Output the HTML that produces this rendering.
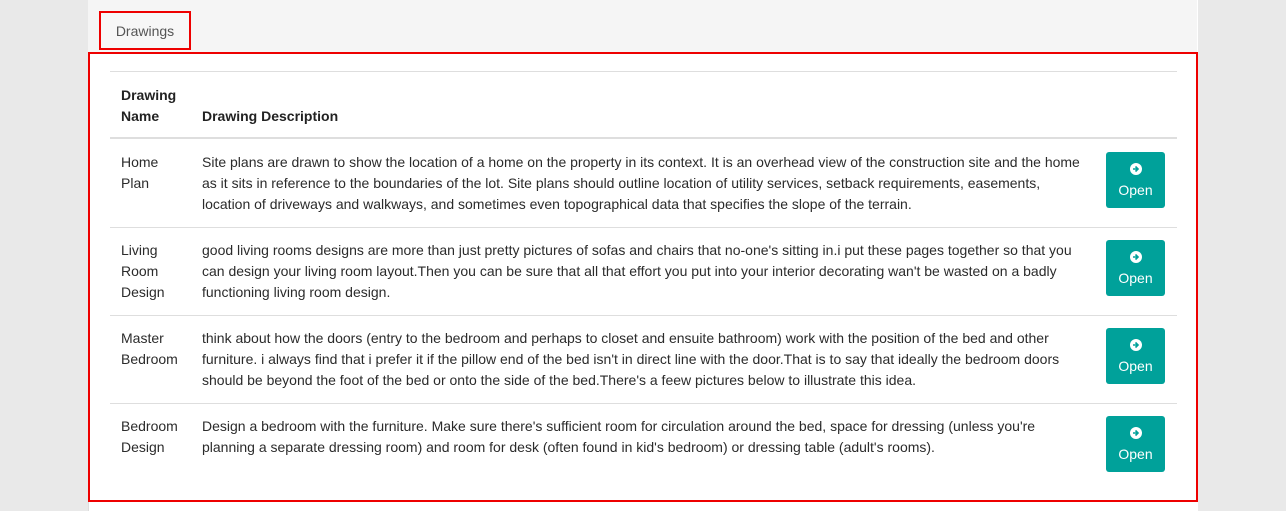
<!DOCTYPE html>
<html><head><style>
body{margin:0;width:1286px;height:511px;background:#e9e9e9;font-family:"Liberation Sans",Arial,sans-serif;color:#2b2b2b;position:relative;overflow:hidden}
.panel{position:absolute;left:88px;top:0;width:1109px;height:511px;background:#fff;border-left:1px solid #ddd}
.top{position:absolute;left:88px;top:0;width:1109px;height:52px;background:#f5f5f5;border-bottom:1px solid #ddd}
.tab{position:absolute;left:99px;top:11px;width:88px;height:35px;border:2px solid #e00;font-size:14px;color:#555;line-height:36px;text-align:center;background:#f7f7f7}
.box{position:absolute;left:88px;top:52px;width:1106px;height:446px;border:2px solid #e00}
.line{position:absolute;left:110px;width:1067px;height:1px;background:#dedede}
.t{position:absolute;font-size:14px;line-height:21px;white-space:nowrap;margin-top:1px}
b.t{font-weight:bold;color:#222}
.btn{position:absolute;left:1106px;width:59px;height:56px;background:#00a19a;border-radius:3px;color:#fff;text-align:center;font-size:14px}
.btn svg{display:block;margin:11px auto 7px}
</style></head><body>
<div class="panel"></div>
<div class="top"></div>
<div class="tab">Drawings</div>
<div class="box"></div>
<div class="line" style="top:71px"></div>
<b class="t" style="left:121px;top:84px">Drawing<br>Name</b>
<b class="t" style="left:202px;top:105px">Drawing Description</b>
<div class="line" style="top:137px;height:2px"></div>

<div class="t" style="left:121px;top:151px">Home<br>Plan</div>
<div class="t" style="left:202px;top:151px">Site plans are drawn to show the location of a home on the property in its context. It is an overhead view of the construction site and the home<br>as it sits in reference to the boundaries of the lot. Site plans should outline location of utility services, setback requirements, easements,<br>location of driveways and walkways, and sometimes even topographical data that specifies the slope of the terrain.</div>
<div class="btn" style="top:152px"><svg width="12" height="12" viewBox="0 0 12 12"><circle cx="6" cy="6" r="6" fill="#fff"/><path d="M3 6h5M5.5 3.5L8 6 5.5 8.5" stroke="#00a19a" stroke-width="1.6" fill="none"/></svg>Open</div>
<div class="line" style="top:227px"></div>

<div class="t" style="left:121px;top:239px">Living<br>Room<br>Design</div>
<div class="t" style="left:202px;top:239px">good living rooms designs are more than just pretty pictures of sofas and chairs that no-one's sitting in.i put these pages together so that you<br>can design your living room layout.Then you can be sure that all that effort you put into your interior decorating wan't be wasted on a badly<br>functioning living room design.</div>
<div class="btn" style="top:240px"><svg width="12" height="12" viewBox="0 0 12 12"><circle cx="6" cy="6" r="6" fill="#fff"/><path d="M3 6h5M5.5 3.5L8 6 5.5 8.5" stroke="#00a19a" stroke-width="1.6" fill="none"/></svg>Open</div>
<div class="line" style="top:315px"></div>

<div class="t" style="left:121px;top:327px">Master<br>Bedroom</div>
<div class="t" style="left:202px;top:327px">think about how the doors (entry to the bedroom and perhaps to closet and ensuite bathroom) work with the position of the bed and other<br>furniture. i always find that i prefer it if the pillow end of the bed isn't in direct line with the door.That is to say that ideally the bedroom doors<br>should be beyond the foot of the bed or onto the side of the bed.There's a feew pictures below to illustrate this idea.</div>
<div class="btn" style="top:328px"><svg width="12" height="12" viewBox="0 0 12 12"><circle cx="6" cy="6" r="6" fill="#fff"/><path d="M3 6h5M5.5 3.5L8 6 5.5 8.5" stroke="#00a19a" stroke-width="1.6" fill="none"/></svg>Open</div>
<div class="line" style="top:403px"></div>

<div class="t" style="left:121px;top:415px">Bedroom<br>Design</div>
<div class="t" style="left:202px;top:415px">Design a bedroom with the furniture. Make sure there's sufficient room for circulation around the bed, space for dressing (unless you're<br>planning a separate dressing room) and room for desk (often found in kid's bedroom) or dressing table (adult's rooms).</div>
<div class="btn" style="top:416px"><svg width="12" height="12" viewBox="0 0 12 12"><circle cx="6" cy="6" r="6" fill="#fff"/><path d="M3 6h5M5.5 3.5L8 6 5.5 8.5" stroke="#00a19a" stroke-width="1.6" fill="none"/></svg>Open</div>
</body></html>
